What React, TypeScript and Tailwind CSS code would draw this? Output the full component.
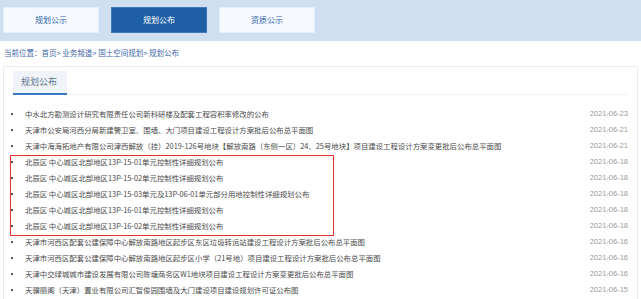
import React from "react";

const TABS = [
  { label: "规划公示", active: false },
  { label: "规划公布", active: true },
  { label: "资质公示", active: false },
];

const ITEMS: [string, string][] = [
  ["中水北方勘测设计研究有限责任公司新科研楼及配套工程容积率修改的公布", "2021-06-23"],
  ["天津市公安局河西分局新建警卫室、围墙、大门项目建设工程设计方案批后公布总平面图", "2021-06-21"],
  ["天津中海海拓地产有限公司津西解放（挂）2019-126号地块【解放南路（东侧一区）24、25号地块】项目建设工程设计方案变更批后公布总平面图", "2021-06-21"],
  ["北辰区 中心城区北部地区13P-15-01单元控制性详细规划公布", "2021-06-18"],
  ["北辰区 中心城区北部地区13P-15-02单元控制性详细规划公布", "2021-06-18"],
  ["北辰区 中心城区北部地区13P-15-03单元及13P-06-01单元部分用地控制性详细规划公布", "2021-06-18"],
  ["北辰区 中心城区北部地区13P-16-01单元控制性详细规划公布", "2021-06-18"],
  ["北辰区 中心城区北部地区13P-16-02单元控制性详细规划公布", "2021-06-18"],
  ["天津市河西区配套公建保障中心解放南路地区起步区东区垃圾转运站建设工程设计方案批后公布总平面图", "2021-06-16"],
  ["天津市河西区配套公建保障中心解放南路地区起步区小学（21号地）项目建设工程设计方案批后公布总平面图", "2021-06-16"],
  ["天津中交绿城城市建设发展有限公司陈塘商务区W1地块项目建设工程设计方案变更批后公布总平面图", "2021-06-16"],
  ["天骥丽阁（天津）置业有限公司汇智俊园围墙及大门建设项目建设规划许可证公布图", "2021-06-15"],
];

const font = { fontFamily: '"Noto Sans CJK SC", "Liberation Sans", sans-serif' };

export default function App() {
  return (
    <div className="w-[641px] h-[299px] overflow-hidden bg-white" style={font}>
      {/* tab band */}
      <div className="h-[41px] bg-[#cfdff0] flex items-start gap-[12px] pl-[3px] pt-[7px]">
        {TABS.map(t => (
          <div key={t.label}
            className={`w-[96px] h-[26px] flex items-center justify-center text-[8px] border ${
              t.active
                ? "bg-[#1e5fa6] border-[#3d78bd] text-white"
                : "bg-[#f5f9fe] border-[#e4eef9] text-[#2d64a8]"
            }`}>
            {t.label}
          </div>
        ))}
      </div>

      {/* breadcrumb */}
      <div className="h-[25px] flex items-center pl-[4px] pb-[1px] text-[7.5px] text-[#3c66a6] whitespace-nowrap">
        当前位置：首页&gt; 业务频道&gt; 国土空间规划&gt; 规划公布
      </div>

      {/* card */}
      <div className="relative ml-[3px] w-[635px] h-[240px] border border-b-0 border-[#ececec] pt-[4px]">
        <div className="flex items-end pl-[9px] pr-[9px]">
          <div className="w-[54px] h-[24px] bg-[#f0f4f9] border-b-2 border-[#3a78c3] flex items-center pl-[8px] text-[9px] text-[#5f7690]">
            规划公布
          </div>
          <div className="flex-1 border-b border-[#f1f1f1]" />
        </div>

        <ul className="mt-[11px] pl-[7px] pr-[9px]">
          {ITEMS.map(([title, date], i) => (
            <li key={i} className="h-[16px] flex items-center text-[7.4px] whitespace-nowrap">
              <span className="w-[2px] h-[2px] bg-[#555] mr-[12px] shrink-0" />
              <span className="flex-1 text-[#4a4a4a] overflow-hidden">{title}</span>
              <span className="text-[#9a9a9a] ml-2 text-[7.5px]" style={{ fontFamily: '"Liberation Sans", sans-serif' }}>{date}</span>
            </li>
          ))}
        </ul>

        {/* red highlight annotation */}
        <div className="absolute left-[6px] top-[88px] w-[324px] h-[81px] border-[1.5px] border-[#e8302c] pointer-events-none" />
      </div>
    </div>
  );
}
